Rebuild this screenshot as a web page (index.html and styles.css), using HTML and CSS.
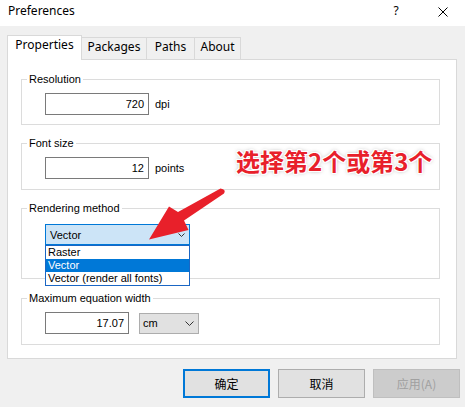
FILE: index.html
```html
<!DOCTYPE html>
<html>
<head>
<meta charset="utf-8">
<link rel="stylesheet" href="styles.css">
</head>
<body>
<div class="dialog">
  <div class="titlebar">
    <span class="title">Preferences</span>
    <span class="help">?</span>
    <svg class="close" width="10" height="10" viewBox="0 0 10 10"><path d="M0.5 0.5 L9.5 9.5 M9.5 0.5 L0.5 9.5" stroke="#000" stroke-width="1" fill="none"/></svg>
  </div>
  <div class="tabs">
    <div class="tab active">Properties</div>
    <div class="tab t-packages">Packages</div>
    <div class="tab t-paths">Paths</div>
    <div class="tab t-about">About</div>
  </div>
  <div class="panel">
    <fieldset class="group g1">
      <legend>Resolution</legend>
      <div class="row">
        <div class="field wide">720</div>
        <span class="unit">dpi</span>
      </div>
    </fieldset>
    <fieldset class="group g2">
      <legend>Font size</legend>
      <div class="row">
        <div class="field wide">12</div>
        <span class="unit">points</span>
      </div>
    </fieldset>
    <fieldset class="group g3">
      <legend>Rendering method</legend>
      <div class="combo-wrap">
        <div class="select">
          <span>Vector</span>
          <svg class="chev" width="7" height="4" viewBox="0 0 7 4"><path d="M0.5 0.5 L3.5 3.5 L6.5 0.5" stroke="#333" fill="none"/></svg>
        </div>
        <div class="droplist">
          <div class="item">Raster</div>
          <div class="item sel">Vector</div>
          <div class="item">Vector (render all fonts)</div>
        </div>
      </div>
    </fieldset>
    <fieldset class="group g4">
      <legend>Maximum equation width</legend>
      <div class="row">
        <div class="field narrow">17.07</div>
        <div class="unitbox">
          <span>cm</span>
          <svg width="9" height="5" viewBox="0 0 9 5"><path d="M0.5 0.5 L4.5 4.5 L8.5 0.5" stroke="#333" fill="none"/></svg>
        </div>
      </div>
    </fieldset>
  </div>
  <div class="buttons">
    <div class="btn default">确定</div>
    <div class="btn">取消</div>
    <div class="btn disabled">应用(A)</div>
  </div>
</div>
<div class="callout">选择第2个或第3个</div>
<svg class="arrow" width="465" height="407" viewBox="0 0 465 407">
  <path d="M220.5 188.5 L178 212 L169 206.5 L149 239.5 L188.5 230 L184 220.5 L224 193.5 Q226.5 189.5 220.5 188.5 Z" fill="#e8202a"/>
</svg>
</body>
</html>
```
FILE: styles.css
```css
* { box-sizing: border-box; }
html, body { margin: 0; padding: 0; }
body {
  width: 465px;
  height: 407px;
  background: #f0f0f0;
  overflow: hidden;
  position: relative;
  font-family: "Noto Sans", "Noto Sans CJK SC", sans-serif;
  font-size: 12px;
  color: #000;
}
.titlebar {
  height: 26px;
  background: #fff;
  display: flex;
  align-items: center;
  padding: 0 17px 4px 8px;
}
.title { flex: 1; line-height: 16px; }
.help { width: 12px; text-align: center; margin-right: 36px; line-height: 16px; }
.close { display: block; margin-top: 1px; }

.tabs {
  margin: 9px 0 0 7px;
  height: 24px;
  display: flex;
  align-items: flex-end;
}
.tab {
  height: 22px;
  border: 1px solid #d9d9d9;
  border-bottom: none;
  background: #f0f0f0;
  text-align: center;
  line-height: 16px;
  padding-top: 1px;
  margin-left: -1px;
}
.tab.active {
  height: 25px;
  margin-bottom: -1px;
  margin-left: 0;
  width: 75px;
  background: #fff;
  position: relative;
  z-index: 1;
  padding-top: 1px;
}
.t-packages { width: 66px; }
.t-paths { width: 49px; }
.t-about { width: 47px; }

.panel {
  margin-left: 7px;
  width: 450px;
  height: 300px;
  background: #fff;
  border: 1px solid #d9d9d9;
  padding: 12px 16px 0 13px;
  display: flex;
  flex-direction: column;
}
.group {
  margin: 0;
  border: 1px solid #dcdcdc;
  padding: 7px 0 9px 0;
  min-width: 0;
  font-family: "Liberation Sans", Arial, sans-serif;
  font-size: 11px;
}
.group legend {
  padding: 0 2px;
  margin-left: 5px;
  line-height: 14px;
  font-size: 11px;
}
.row, .combo-wrap { margin-left: 23px; }
.g2 { margin-top: 11px; padding-bottom: 10px; }
.g3 { margin-top: 11px; padding-top: 9px; padding-bottom: 33px; }
.g4 { margin-top: 12px; padding-bottom: 10px; }

.row { display: flex; align-items: center; }
.field {
  height: 22px;
  border: 1px solid #7a7a7a;
  background: #fff;
  display: flex;
  align-items: center;
  justify-content: flex-end;
  padding-right: 4px;
}
.wide { width: 104px; }
.narrow { width: 84px; }
.unit { margin-left: 6px; }
.unitbox {
  margin-left: 10px;
  width: 60px;
  height: 21px;
  border: 1px solid #adadad;
  background: #e1e1e1;
  display: flex;
  align-items: center;
  justify-content: space-between;
  padding: 0 4px 0 3px;
}
.unitbox svg { display: block; }

.combo-wrap { position: relative; width: 145px; }
.select {
  height: 21px;
  border: 1px solid #0078d7;
  background: #cce4f7;
  display: flex;
  align-items: center;
  justify-content: space-between;
  padding: 0 4px 0 4px;
}
.chev { display: block; }
.droplist {
  position: absolute;
  left: 0;
  top: 21px;
  width: 145px;
  background: #fff;
  border: 1px solid #1a66c4;
  z-index: 2;
}
.item {
  height: 13px;
  line-height: 13px;
  padding-left: 2px;
  white-space: nowrap;
}
.item.sel { background: #0078d7; color: #fff; }

.buttons {
  margin-top: 10px;
  display: flex;
  justify-content: flex-end;
  gap: 8px;
  padding-right: 5px;
}
.btn {
  width: 87px;
  height: 29px;
  border: 1px solid #adadad;
  background: #e1e1e1;
  display: flex;
  align-items: center;
  justify-content: center;
  font-family: "Noto Sans CJK SC", "Noto Sans", sans-serif;
  font-size: 12px;
}
.btn.default { border: 2px solid #0078d7; }
.btn.disabled { background: #cccccc; border-color: #bfbfbf; color: #a0a0a0; }

.callout {
  position: absolute;
  left: 236px;
  top: 149px;
  font-family: "Noto Sans CJK SC", sans-serif;
  font-weight: 700;
  font-size: 24px;
  line-height: 24px;
  color: #e8202a;
  white-space: nowrap;
  text-shadow: 1px 1px 0 #fff, -1px -1px 0 #fff, 1px -1px 0 #fff, -1px 1px 0 #fff,
               0 1px 0 #fff, 0 -1px 0 #fff, 1px 0 0 #fff, -1px 0 0 #fff, 0 0 4px #999;
}
.arrow {
  position: absolute;
  left: 0;
  top: 0;
  pointer-events: none;
}
```
